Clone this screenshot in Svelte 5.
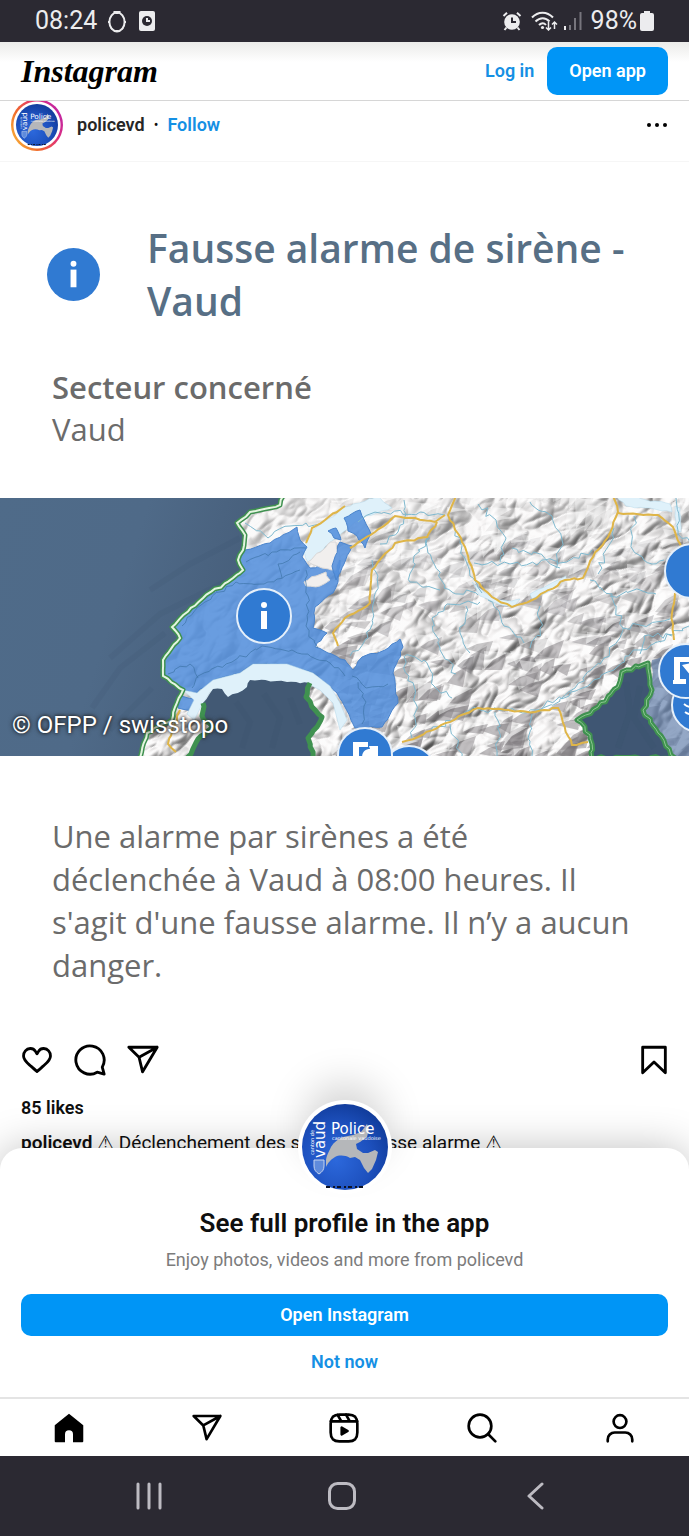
<!-- App.svelte – mobile post view with the "open in app" sheet -->
<script lang="ts">
  type Point = [number, number];

  const tabs = [
    { id: 'home', label: 'Home' },
    { id: 'share', label: 'Messages' },
    { id: 'reels', label: 'Reels' },
    { id: 'search', label: 'Search' },
    { id: 'profile', label: 'Profile' },
  ];

  // small seeded generator so the map always draws the same way
  function seeded(seed: number) {
    let s = seed;
    return () => {
      s = (s * 16807) % 2147483647;
      return s / 2147483647 - 0.5;
    };
  }

  // breaks each segment into short jittered steps
  function meander(pts: Point[], amp = 3, seed = 7, close = false) {
    const rnd = seeded(seed * 7919);
    const list = close ? [...pts, pts[0]] : pts;
    let d = `M${list[0][0]} ${list[0][1]}`;
    for (let i = 1; i < list.length; i++) {
      const [x0, y0] = list[i - 1];
      const [x1, y1] = list[i];
      const steps = Math.max(1, Math.round(Math.hypot(x1 - x0, y1 - y0) / 5));
      for (let k = 1; k <= steps; k++) {
        const t = k / steps;
        const j = k === steps ? 0 : amp;
        d += `L${(x0 + (x1 - x0) * t + rnd() * j).toFixed(1)} ${(y0 + (y1 - y0) * t + rnd() * j).toFixed(1)}`;
      }
    }
    return close ? d + 'Z' : d;
  }

  const westBorder: Point[] = [[283, -2], [280, 7], [250, 14], [237, 25], [245, 37], [243, 52], [238, 62], [243, 72], [233, 80], [203, 100], [172, 129], [180, 140], [163, 162], [163, 178], [183, 192], [175, 209], [172, 222], [147, 235], [140, 260]];
  const southShore: Point[] = [[187, 260], [198, 241], [213, 229], [202, 218], [203, 205], [213, 191], [222, 191], [228, 199], [247, 189], [250, 182], [287, 184], [310, 185], [306, 199], [322, 219], [308, 240], [313, 260]];
  const italy: Point[] = [[648, 165], [622, 174], [618, 189], [598, 209], [577, 222], [590, 237], [592, 260], [675, 260], [658, 235], [643, 212], [652, 192]];
  const ticino: Point[] = [[652, 162], [668, 156], [692, 145], [692, 260], [675, 260], [658, 235], [643, 212], [652, 192]];
  const vaud: Point[] = [[245, 52], [270, 45], [297, 29], [300, 42], [307, 49], [302, 59], [310, 70], [328, 66], [340, 62], [338, 84], [333, 95], [315, 109], [313, 130], [327, 135], [315, 149], [328, 155], [345, 162], [353, 172], [362, 159], [385, 152], [400, 141], [403, 149], [393, 175], [398, 205], [382, 229], [355, 230], [345, 209], [337, 195], [313, 175], [287, 167], [253, 166], [240, 175], [213, 182], [197, 195], [183, 192], [164, 178], [164, 162], [181, 140], [173, 129], [204, 101], [234, 81], [244, 72], [239, 62]];

  const enclaves: Point[][] = [
    [[308, 64], [328, 46], [336, 44], [340, 60], [336, 72], [322, 70]],
    [[304, 84], [316, 78], [326, 74], [330, 82], [320, 88], [306, 88]],
  ];

  const patches: Point[][] = [
    [[344, 20], [360, 12], [366, 26], [371, 36], [365, 50], [357, 38], [348, 33]],
    [[328, 33], [336, 30], [341, 42], [334, 40]],
    [[340, 44], [352, 48], [344, 66], [336, 82], [332, 68]],
    [[180, 198], [195, 201], [192, 213], [178, 210]],
  ];

  const roads: Point[][] = [
    [[456, -2], [448, 17], [465, 49], [475, 82], [492, 99], [512, 109], [532, 102], [565, 82], [583, 80], [593, 59], [608, 39], [618, 14], [613, -2]],
    [[618, 15], [658, 17], [673, 29], [682, 52]],
    [[675, 95], [672, 115], [674, 142]],
    [[445, 17], [435, 24], [395, 18], [375, 34], [350, 50]],
    [[437, 24], [427, 39], [395, 45], [372, 72], [370, 105], [345, 120], [333, 135], [338, 148]],
    [[402, 244], [418, 239], [478, 210], [535, 214], [558, 210], [563, 225], [572, 247], [588, 244]],
    [[345, 8], [325, 22], [312, 30], [306, 45]],
    [[180, 212], [172, 232], [168, 246], [176, 254]],
  ];

  const rivers: Point[][] = [
    [[445, 17], [420, 14], [370, 16], [358, 24]],
    [[452, 22], [460, 45], [470, 78], [482, 95]],
    [[427, 40], [432, 62], [444, 90], [478, 97]],
    [[430, 40], [414, 58], [410, 84], [440, 92]],
    [[372, 62], [378, 78], [373, 106], [368, 140], [350, 158]],
    [[474, 65], [510, 66], [570, 62], [592, 52]],
    [[500, 64], [506, 40], [496, 22], [478, 6]],
    [[556, 70], [562, 42], [552, 18], [530, 4]],
    [[512, 50], [540, 56], [560, 70]],
    [[590, 82], [612, 96], [623, 130], [604, 160], [575, 190], [540, 214]],
    [[623, 130], [650, 126], [672, 118]],
    [[634, 18], [633, 52], [652, 66], [664, 62]],
    [[488, 102], [504, 128], [524, 145]],
    [[480, 104], [445, 108], [432, 120], [440, 150], [456, 176]],
    [[466, 108], [460, 135], [470, 155]],
    [[405, 158], [424, 162], [436, 190], [452, 200]],
    [[540, 108], [540, 130], [530, 150]],
    [[412, 240], [416, 206], [409, 178], [404, 158]],
    [[430, 234], [470, 212], [536, 212], [590, 186], [640, 152], [689, 128]],
    [[450, 226], [458, 246], [462, 258]],
    [[495, 214], [500, 236], [497, 258]],
    [[532, 216], [528, 240], [532, 258]],
    [[614, 30], [604, 58], [598, 76]],
    [[676, 0], [678, 36], [690, 44]],
    [[404, 2], [406, 16], [398, 34], [380, 46]],
    [[245, 25], [268, 40], [290, 28], [320, 26]],
    [[640, 156], [644, 138], [672, 138]],
    [[610, 98], [640, 92], [656, 96]],
  ];

  const vaudLines: Point[][] = [
    [[192, 190], [198, 178], [232, 164], [262, 148], [292, 152], [330, 165], [345, 178]],
    [[182, 128], [205, 104], [236, 84], [264, 86], [300, 72]],
    [[246, 64], [272, 54], [306, 50]],
    [[282, 80], [278, 66], [300, 54]],
    [[306, 72], [308, 98], [306, 128], [318, 150]],
    [[352, 178], [366, 190], [388, 186]],
    [[362, 226], [366, 204], [358, 184]],
    [[168, 176], [190, 166], [198, 180]],
  ];

  // faceted slopes: a lit side and a shaded side for each small ridge
  const ridges = (() => {
    const rnd = seeded(4242);
    const out: { lit: string; shade: string; depth: number }[] = [];
    for (let i = 0; i < 260; i++) {
      const x = 510 + rnd() * 380;
      const y = 130 + rnd() * 270;
      const len = 14 + (rnd() + 0.5) * 18;
      const rise = len * (0.5 + rnd() * 0.8);
      const w = 5 + (rnd() + 0.5) * 7;
      const ridge = `M${x.toFixed(0)} ${y.toFixed(0)}l${(len * 0.4).toFixed(0)} ${(-rise * 0.6).toFixed(0)} ${(len * 0.6).toFixed(0)} ${(-rise * 0.4).toFixed(0)}`;
      out.push({
        lit: `${ridge} ${(-len * 0.7 - w).toFixed(0)} ${(-w * 0.3).toFixed(0)}z`,
        shade: `${ridge} ${(-len * 0.2).toFixed(0)} ${(rise * 0.6 + w).toFixed(0)}z`,
        depth: Math.max(0.1, Math.min(0.48, 0.1 + (y - 40) / 350)),
      });
    }
    return out;
  })();

  let liked = $state(false);
</script>

{#snippet badge(name: string)}
  <svg class={name} viewBox="0 0 86 86" role="img" aria-label="policevd">
    <defs>
      <radialGradient id="{name}-fill" cx="0.4" cy="0.65" r="0.7">
        <stop offset="0" stop-color="#2c68dc" />
        <stop offset="0.6" stop-color="#1d50bd" />
        <stop offset="1" stop-color="#103a98" />
      </radialGradient>
    </defs>
    <circle cx="43" cy="43" r="43" fill="url(#{name}-fill)" />
    <path
      d="M24 57c0-5 3-9 5-14 3-5 7-8 12-10l10-2 8-3 6-8 2 5-2 8-7 5-4 2 1 5 6 4h5l7-3 3 2-2 8-4 9-4 4-4-5-4-8-5-3-5 1c-5-3-11-3-15-1-5 3-7 6-9 10z"
      fill="#b5b7ba"
    />
    <text class="b-police" x="29" y="30">Police</text>
    <text class="b-sub" x="30" y="36">cantonale vaudoise</text>
    <text class="b-vaud" transform="translate(23 54) rotate(-90)">vaud</text>
    <text class="b-canton" transform="translate(12 51) rotate(-90)">canton de</text>
    <path d="M12 56h10v6c0 4-2 6-5 8-3-2-5-4-5-8z" fill="#5f8bdc" stroke="#c5d3ee" />
    <path d="M24 83h38" stroke="#0c1226" stroke-width="2" stroke-dasharray="4 3 2 2" />
  </svg>
{/snippet}

{#snippet icon(name: string)}
  <svg class="icon" viewBox="0 0 24 24" aria-hidden="true">
    {#if name === 'heart'}
      <path d="M16.792 3.904A4.989 4.989 0 0 1 21.5 9.122c0 3.072-2.652 4.959-5.197 7.222-2.512 2.243-3.865 3.469-4.303 3.752-.477-.309-2.143-1.823-4.303-3.752C5.141 14.072 2.5 12.167 2.5 9.122a4.989 4.989 0 0 1 4.708-5.218 4.21 4.21 0 0 1 3.675 1.941c.84 1.175.98 1.763 1.12 1.763s.278-.588 1.11-1.766a4.17 4.17 0 0 1 3.679-1.938Z" />
    {:else if name === 'comment'}
      <path d="M20.656 17.008a9.993 9.993 0 1 0-3.59 3.615L22 22Z" />
    {:else if name === 'share'}
      <path d="M22 3 9.218 10.083M11.698 20.334 22 3H2l7.218 7.084z" />
    {:else if name === 'save'}
      <path d="M20 21 12 13.44 4 21V3h16z" />
    {:else if name === 'home'}
      <path class="solid" d="M12 1.3 22.7 10v12a.7.7 0 0 1-.7.7h-7v-6a3 3 0 0 0-6 0v6H2a.7.7 0 0 1-.7-.7V10z" />
    {:else if name === 'reels'}
      <path d="M2.05 7h19.9M13.504 2l2.858 5M7.207 2.11 10.002 7" />
      <path d="M2 12v3.45c0 2.849.698 4.006 1.606 4.945.94.908 2.098 1.607 4.946 1.607h6.896c2.848 0 4.006-.699 4.946-1.607.908-.939 1.606-2.096 1.606-4.945V8.552c0-2.848-.698-4.006-1.606-4.945C19.454 2.699 18.296 2 15.448 2H8.552c-2.848 0-4.006.699-4.946 1.607C2.698 4.546 2 5.704 2 8.552Z" />
      <path class="solid" d="M9.763 17.664a.908.908 0 0 1-.454-.787V11.63a.909.909 0 0 1 1.364-.788l4.545 2.624a.909.909 0 0 1 0 1.575l-4.545 2.624a.91.91 0 0 1-.91 0Z" />
    {:else if name === 'search'}
      <circle cx="10.5" cy="10.5" r="8.5" />
      <path d="M16.511 16.511 22 22" />
    {:else if name === 'profile'}
      <circle cx="12" cy="7.2" r="4.8" />
      <path d="M2.8 22v-1.4a5.2 5.2 0 0 1 5.2-5.2h8a5.2 5.2 0 0 1 5.2 5.2V22" />
    {/if}
  </svg>
{/snippet}

<div class="phone">
  <div class="status">
    <span class="time">08:24</span>
    <svg class="s-ring" viewBox="0 0 20 24" aria-hidden="true">
      <ellipse cx="10" cy="13" rx="7.6" ry="9.4" />
      <path class="s-fill" d="M7 2h6l1 1-3 2H9L6 3z" />
      <path d="M1 13h2M17 13h2M10 21v2M4 20l1-1M16 20l-1-1" />
    </svg>
    <svg class="s-app" viewBox="0 0 16 20" aria-hidden="true">
      <rect class="s-fill" width="16" height="20" rx="2" />
      <circle cx="8" cy="10" r="5" fill="#2b2932" stroke="none" />
      <path d="M8 7v3h3" />
    </svg>
    <span class="grow"></span>
    <svg class="s-alarm" viewBox="0 0 20 20" aria-hidden="true">
      <circle class="s-fill" cx="10" cy="11" r="7.8" />
      <path d="M1.500 5 5 1.800M18.500 5 15 1.800M4.500 16.500 2.500 19M15.500 16.500l2 2.500" />
      <path class="s-dark" d="M10 6.500V11h4" />
    </svg>
    <svg class="s-wifi" viewBox="0 0 27 20" aria-hidden="true">
      <path d="M1 6.500c6-6.500 15-6.500 21 0M4.500 10.500c4.500-4.500 10-4.500 14 0M8 14c2.500-2.500 5-2.500 7 0" />
      <circle class="s-fill" cx="11.500" cy="16.500" r="1.600" />
      <path class="s-thin" d="M17.500 11v8M15 16.500l2.500 2.500 2.500-2.500M23.500 18v-7M21 13.500l2.500-2.500 2.500 2.500" />
    </svg>
    <svg class="s-signal" viewBox="0 0 18 20" aria-hidden="true">
      <rect class="s-fill" x="0" y="15" width="2" height="4" />
      <path d="M6 19v-5M11 19V7M16.500 19V1" />
    </svg>
    <span class="percent">98%</span>
    <svg class="s-battery" viewBox="0 0 14 20" aria-hidden="true">
      <path class="s-fill" d="M4 0h6v2h2a2 2 0 0 1 2 2v14a2 2 0 0 1-2 2H2a2 2 0 0 1-2-2V4a2 2 0 0 1 2-2h2z" />
    </svg>
  </div>

  <header class="top">
    <a class="wordmark" href="#home">Instagram</a>
    <a class="login" href="#login">Log in</a>
    <button class="open-app">Open app</button>
  </header>

  <main>
    <article class="post">
      <div class="post-head">
        <span class="story-ring">{@render badge('avatar')}</span>
        <a class="user" href="#policevd">policevd</a>
        <span class="dot">•</span>
        <button class="link follow">Follow</button>
        <button class="more" aria-label="More options">
          <svg viewBox="0 0 24 6" aria-hidden="true">
            <circle cx="4" cy="3" r="2" /><circle cx="12" cy="3" r="2" /><circle cx="20" cy="3" r="2" />
          </svg>
        </button>
      </div>

      <section class="alert">
        <div class="alert-title">
          <svg class="info" viewBox="0 0 54 54" aria-hidden="true">
            <circle cx="27" cy="27" r="27" />
            <path d="M24 22h6v18h-6z" />
            <circle class="i-dot" cx="27" cy="16" r="3" />
          </svg>
          <h1>Fausse alarme de sirène - Vaud</h1>
        </div>
        <h2>Secteur concerné</h2>
        <p>Vaud</p>
      </section>

      <figure class="map">
        <svg viewBox="0 0 689 258" role="img" aria-label="Carte de la Suisse romande">
          <defs>
            <filter id="relief" x="0" y="0" width="100%" height="100%" color-interpolation-filters="sRGB">
              <feTurbulence type="turbulence" baseFrequency="0.016 0.028" numOctaves="3" seed="11" />
              <feDiffuseLighting surfaceScale="13" diffuseConstant="1.08" lighting-color="#f8f6f6">
                <feDistantLight azimuth="250" elevation="64" />
              </feDiffuseLighting>
            </filter>
            <linearGradient id="plain" x1="0" x2="1" y1="0" y2="0.3">
              <stop offset="0" stop-color="#4f6b89" />
              <stop offset="0.5" stop-color="#4f6a88" />
              <stop offset="1" stop-color="#455c78" />
            </linearGradient>
            <linearGradient id="fade" x1="0" x2="1" y1="0" y2="1">
              <stop offset="0" stop-color="#f7f6f6" stop-opacity="0.7" />
              <stop offset="0.5" stop-color="#f7f6f6" stop-opacity="0.4" />
              <stop offset="1" stop-color="#f7f6f6" stop-opacity="0.25" />
            </linearGradient>
          </defs>

          <rect width="689" height="258" fill="#f0efef" />
          <g transform="rotate(-38 420 130)">
            <rect x="60" y="-260" width="760" height="800" filter="url(#relief)" />
          </g>
          <rect x="140" width="549" height="258" fill="url(#fade)" />
          {#each ridges as r}
            <path d={r.lit} fill="#fff" opacity="0.45" />
            <path d={r.shade} fill="#7f7c80" opacity={r.depth} />
          {/each}

          <path class="water" d={meander([[378, -2], [345, 9], [313, 32], [302, 52], [308, 64], [333, 42], [350, 29], [366, 18], [392, 10]], 2, 3, true)} />
          <path class="water" d={meander([[472, 84], [484, 94], [498, 102], [512, 103], [520, 101], [514, 109], [498, 106], [480, 98]], 1, 4, true)} />
          <path class="water" d={meander([[530, 96], [548, 87], [566, 78], [566, 82], [546, 95], [532, 101]], 1, 5, true)} />
          <path class="water" d={meander([[616, -2], [626, 8], [650, 10], [672, 14], [670, 6], [646, 2], [636, -2]], 2, 6, true)} />
          <path class="water" d={meander([[675, 8], [680, 10], [681, 34], [676, 32]], 1, 8, true)} />

          <path d={meander(ticino, 2, 9, true)} fill="#6683ae" opacity="0.7" />
          <path class="vaud" d={meander(vaud, 2, 12, true)} />
          {#each enclaves as e, i}
            <path d={meander(e, 3, 20 + i, true)} fill="#f1efee" stroke="#d9d8d8" />
          {/each}
          {#each patches as p, i}
            <path class="vaud" d={meander(p, 2, 30 + i, true)} />
          {/each}
          {#each vaudLines as l, i}
            <path d={meander(l, 4, 40 + i)} fill="none" stroke="#3a72a4" opacity="0.65" />
          {/each}

          {#each rivers as r, i}
            <path class="river" d={meander(r, 6, 50 + i)} />
          {/each}
          {#each roads as r, i}
            <path class="road" d={meander(r, 2, 90 + i)} />
          {/each}

          <path class="water" d="M183 192 197 195 213 182 240 175 253 166H287L313 175 330 188 340 205 347 222 340 232 333 205 320 192 310 187 287 186 254 184 247 191 228 201 220 192 210 194 202 207 194 222 187 216 194 202z" />

          <path d={meander([...westBorder, [-5, 262], [-5, -5]], 2, 2, true)} fill="url(#plain)" />
          <path d={meander([...southShore, [187, 260]], 2, 15, true)} fill="#425974" />
          <path d={meander(italy, 3, 16, true)} fill="#3f5673" />
          <g fill="none" stroke="#344a66" opacity="0.1" stroke-width="6">
            <path d="M240 40 190 66 150 92M225 84 160 116 110 160M165 135 120 170 92 210M152 190 110 232" />
            <path d="M236 204 250 224 242 250M264 196 280 220 272 250M290 200 300 226M626 184 630 214 618 250M640 188 634 220 654 250" />
          </g>

          <path class="border" d={meander(westBorder, 2, 2)} />
          <path class="border-in" d={meander(westBorder, 2, 2)} />
          <path class="border" d={meander(southShore.slice(0, 5), 3, 15)} />
          <path class="border" d={meander(southShore.slice(11), 3, 18)} />
          <path class="border" d={meander(italy, 3, 16, true)} />
          <path class="border-in dim" d={meander(italy, 3, 16, true)} />

          <g class="pin">
            <circle cx="264" cy="118" r="27" />
            <path d="M261 113h6v18h-6z" />
            <circle class="i-dot" cx="264" cy="107" r="3" />
            <circle cx="692" cy="73" r="27" />
            <circle cx="699" cy="207" r="27" />
            <path class="wave" d="M684 206c5 4 8 4 12 2M685 214c4 3 7 3 11 2" />
            <circle cx="686" cy="173" r="27" />
            <path d="M674 159h16v5h-10v17h6v5h-13v-4h1zM682 167l10 12v-14z" />
            <circle cx="409" cy="275" r="27" />
            <circle cx="365" cy="257" r="27" />
            <path d="M353 244h15v5h-9v10h-6zM362 260c0-6 3-9 8-9l-1-3h9v12z" />
          </g>
        </svg>
        <figcaption>© OFPP / swisstopo</figcaption>
      </figure>

      <p class="message">
        Une alarme par sirènes a été déclenchée à Vaud à 08:00 heures. Il s'agit d'une fausse alarme. Il n’y a aucun danger.
      </p>

      <div class="actions">
        <button aria-label="Like" aria-pressed={liked} onclick={() => (liked = !liked)}>{@render icon('heart')}</button>
        <button aria-label="Comment">{@render icon('comment')}</button>
        <button aria-label="Share">{@render icon('share')}</button>
        <span class="grow"></span>
        <button aria-label="Save">{@render icon('save')}</button>
      </div>
      <p class="likes">85 likes</p>
      <p class="caption"><b>policevd</b> ⚠ Déclenchement des sirènes, fausse alarme ⚠</p>
    </article>
  </main>

  <section class="sheet">
    <div class="sheet-badge">{@render badge('big-avatar')}</div>
    <h2>See full profile in the app</h2>
    <p>Enjoy photos, videos and more from policevd</p>
    <button class="primary">Open Instagram</button>
    <button class="link">Not now</button>
  </section>

  <nav class="tabs">
    {#each tabs as t (t.id)}
      <a href="#{t.id}" aria-label={t.label}>{@render icon(t.id)}</a>
    {/each}
  </nav>

  <div class="system">
    <button aria-label="Recents">
      <svg viewBox="0 0 28 28" aria-hidden="true"><path d="M3 2v24M14 2v24M25 2v24" /></svg>
    </button>
    <button aria-label="Home screen">
      <svg viewBox="0 0 28 28" aria-hidden="true"><rect x="1.500" y="1.500" width="25" height="25" rx="8" /></svg>
    </button>
    <button aria-label="Back">
      <svg viewBox="0 0 28 28" aria-hidden="true"><path d="M20 2 7 14l13 12" /></svg>
    </button>
  </div>
</div>

<style>
  :global(body) {
    background: #fff;
  }

  .phone {
    font-family: Roboto, "Liberation Sans", sans-serif;
    font-size: 18px;
    line-height: 24px;
    color: #0f0f0f;
    overflow: hidden;
  }

  h1, h2, p, figure {
    margin: 0;
  }

  a {
    color: inherit;
    text-decoration: none;
  }

  button {
    font: inherit;
    color: inherit;
    background: none;
    border: none;
    padding: 0;
    cursor: pointer;
  }

  svg {
    display: block;
  }

  .grow {
    flex: 1;
  }

  /* status bar */
  .status {
    display: flex;
    align-items: center;
    height: 42px;
    padding: 0 35px;
    background: #2b2932;
    color: #ececee;
    font-size: 25px;
  }

  .status svg {
    fill: none;
    stroke: #ececee;
    stroke-width: 2;
  }

  .status .s-fill {
    fill: #ececee;
    stroke: none;
  }

  .status .s-dark {
    stroke: #2b2932;
  }

  .status .s-thin {
    stroke-width: 1.5;
  }

  .s-ring {
    width: 20px;
    height: 24px;
    margin-left: 10px;
  }

  .s-app {
    width: 16px;
    height: 20px;
    margin-left: 12px;
  }

  .s-alarm {
    width: 20px;
    height: 20px;
  }

  .s-wifi {
    width: 27px;
    height: 20px;
    margin-left: 9px;
  }

  .s-signal {
    width: 18px;
    height: 20px;
    margin-left: 6px;
  }

  .status .s-signal path {
    stroke: #77757d;
  }

  .percent {
    margin-left: 9px;
  }

  .s-battery {
    width: 14px;
    height: 20px;
    margin-left: 3px;
  }

  /* app header */
  .top {
    position: relative;
    z-index: 1;
    display: flex;
    align-items: center;
    height: 58px;
    padding: 0 21px;
    background: linear-gradient(#ebebe9, #fff 20px);
    border-bottom: 1px solid #d6d6d6;
    font-weight: 600;
  }

  .wordmark {
    flex: 1;
    color: #000;
    font-family: "Liberation Serif", serif;
    font-size: 32px;
    font-style: italic;
    font-weight: 700;
  }

  .login,
  .link {
    color: #1590e4;
    font-weight: 600;
  }

  .open-app,
  .primary {
    background: #0095f6;
    color: #fff;
    font-weight: 600;
    border-radius: 10px;
  }

  .open-app {
    height: 48px;
    margin-left: 13px;
    padding: 0 22px;
  }

  /* post */
  .post-head {
    display: flex;
    align-items: center;
    height: 48px;
    padding: 0 20px 0 11px;
    margin-bottom: 12px;
  }

  .story-ring {
    flex: none;
    display: grid;
    place-items: center;
    width: 52px;
    height: 52px;
    border-radius: 50%;
    background:
      radial-gradient(circle, #fff 23px, transparent 24px),
      linear-gradient(240deg, #b020b8, #e0307a 35%, #f0682c 65%, #fbc63c);
  }

  .story-ring :global(.avatar) {
    width: 42px;
    height: 42px;
  }

  .user {
    margin-left: 14px;
    color: #262626;
    font-weight: 600;
  }

  .dot {
    margin: 0 9px;
    font-size: 14px;
  }

  .more {
    margin-left: auto;
  }

  .more svg {
    width: 24px;
    height: 6px;
  }

  .b-police,
  .b-vaud,
  .b-sub,
  .b-canton {
    fill: #fff;
    font-family: "DejaVu Sans", sans-serif;
  }

  .b-police,
  .b-vaud {
    font-size: 15px;
  }

  .b-sub,
  .b-canton {
    font-size: 5px;
  }

  .alert {
    padding: 59px 52px 48px;
    border-top: 1px solid #f6f6f6;
    color: #6b6b6b;
    font-family: "Open Sans", "Noto Sans", sans-serif;
    font-size: 31px;
    line-height: 42px;
  }

  .alert-title {
    display: flex;
    align-items: center;
    gap: 47px;
    margin: 0 -5px 39px;
  }

  .info {
    flex: none;
    width: 53px;
    height: 53px;
    fill: #fff;
  }

  .info circle:first-child,
  .pin circle {
    fill: #307ad2;
  }

  .alert h1 {
    color: #576f85;
    font-size: 39px;
    font-weight: 600;
    line-height: 53px;
  }

  .alert h2 {
    font-size: 31px;
    font-weight: 600;
  }

  .map {
    position: relative;
  }

  .map svg {
    width: 100%;
    height: auto;
  }

  .map figcaption {
    position: absolute;
    left: 12px;
    bottom: 19px;
    color: #fff;
    font-size: 24px;
    text-shadow: 0 0 3px #222, 0 0 5px #222;
  }

  .water {
    fill: #dff1fa;
    stroke: #b5d9ea;
    stroke-width: 0.5;
  }

  .vaud {
    fill: #548fdc;
    fill-opacity: 0.88;
    stroke: #4a84cc;
  }

  .river {
    fill: none;
    stroke: #7fb9cf;
    stroke-width: 1;
  }

  .road {
    fill: none;
    stroke: #dfb548;
    stroke-width: 2;
  }

  .border {
    fill: none;
    stroke: #3f9150;
    stroke-width: 5;
    stroke-linejoin: round;
  }

  .border-in {
    fill: none;
    stroke: #e4f5e0;
    stroke-width: 2;
  }

  .border-in.dim {
    stroke: #8cc890;
    stroke-width: 1;
  }

  .pin {
    fill: #fff;
  }

  .pin circle {
    stroke: #e6f0fa;
    stroke-width: 2;
  }

  .pin .i-dot {
    fill: #fff;
    stroke: none;
  }

  .pin .wave {
    fill: none;
    stroke: #fff;
    stroke-width: 2;
  }

  .message {
    padding: 59px 52px 56px;
    color: #6b6b6b;
    font-family: "Open Sans", "Noto Sans", sans-serif;
    font-size: 31px;
    line-height: 43px;
  }

  .icon {
    width: 32px;
    height: 32px;
    fill: none;
    stroke: #000;
    stroke-width: 2;
    stroke-linejoin: round;
    stroke-linecap: round;
  }

  .icon .solid {
    fill: #000;
    stroke: none;
  }

  .actions {
    display: flex;
    gap: 19px;
    padding: 0 18px 0 20px;
  }

  .actions .icon {
    width: 34px;
    height: 34px;
  }

  .likes {
    margin: 19px 21px 11px;
    font-weight: 600;
  }

  .caption {
    padding: 0 21px;
    font-size: 19px;
    white-space: nowrap;
  }

  .caption b {
    font-weight: 600;
  }

  /* bottom sheet, slides over the caption */
  .sheet {
    position: relative;
    display: flex;
    flex-direction: column;
    align-items: center;
    margin-top: -7px;
    padding: 60px 21px 23px;
    background: #fff;
    border-radius: 22px 22px 0 0;
    box-shadow: 0 0 40px rgba(0, 0, 0, 0.25);
  }

  .sheet-badge {
    position: absolute;
    top: -48px;
    left: 50%;
    margin-left: -47px;
    padding: 4px;
    border-radius: 50%;
    background: #fff;
    box-shadow: 0 -24px 40px -8px rgba(0, 0, 0, 0.18);
  }

  .sheet-badge :global(.big-avatar) {
    width: 86px;
    height: 86px;
  }

  .sheet h2 {
    font-size: 26px;
    font-weight: 600;
    line-height: 30px;
  }

  .sheet p {
    margin: 10px 0 22px;
    color: #7c7c7c;
  }

  .primary {
    width: 100%;
    height: 42px;
    margin-bottom: 14px;
  }

  .tabs {
    position: relative;
    display: grid;
    grid-template-columns: repeat(5, 1fr);
    place-items: center;
    height: 57px;
    border-top: 2px solid #e4e4e4;
    background: #fff;
  }

  .system {
    position: relative;
    display: grid;
    grid-template-columns: repeat(3, 1fr);
    place-items: center;
    height: 80px;
    padding: 0 56px 0 52px;
    background: #2b2932;
  }

  .system svg {
    width: 28px;
    height: 28px;
    fill: none;
    stroke: #bdbbc2;
    stroke-width: 3;
    stroke-linecap: round;
    stroke-linejoin: round;
  }
</style>
